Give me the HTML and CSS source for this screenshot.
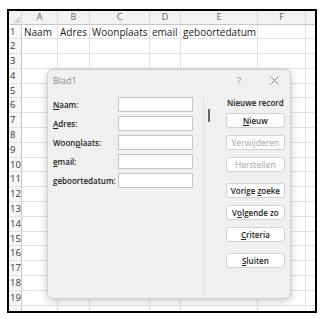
FILE: index.html
```html
<!DOCTYPE html>
<html lang="nl">
<head>
  <meta charset="UTF-8">
  <title>Blad1 - gegevensformulier</title>
  <link rel="stylesheet" href="styles.css">
</head>
<body>
  <div class="frame">
    <div class="sheet" id="sheet">
      <div class="hd corner"></div>
      <div class="hd">A</div>
      <div class="hd">B</div>
      <div class="hd">C</div>
      <div class="hd">D</div>
      <div class="hd">E</div>
      <div class="hd">F</div>
      <div class="hd"></div>

      <div class="rh">1</div>
      <div class="cell">Naam</div>
      <div class="cell">Adres</div>
      <div class="cell">Woonplaats</div>
      <div class="cell">email</div>
      <div class="cell">geboortedatum</div>
      <div class="cell"></div>
      <div class="cell"></div>
    </div>

    <div class="dialog">
      <div class="title-bar">
        <span class="title">Blad1</span>
        <span class="help">?</span>
        <span class="close">
          <svg width="9" height="9" viewBox="0 0 9 9"><path d="M0.5 0.5 L8.5 8.5 M8.5 0.5 L0.5 8.5" stroke="#8a8a8a" stroke-width="1" fill="none"/></svg>
        </span>
      </div>
      <div class="form-body">
        <div class="fields">
          <div class="field"><label><u>N</u>aam:</label><span class="input"></span></div>
          <div class="field"><label><u>A</u>dres:</label><span class="input"></span></div>
          <div class="field"><label>Woon<u>p</u>laats:</label><span class="input"></span></div>
          <div class="field"><label><u>e</u>mail:</label><span class="input"></span></div>
          <div class="field"><label><u>g</u>eboortedatum:</label><span class="input"></span></div>
        </div>
        <div class="divider"></div>
        <div class="scroll"><span class="thumb"></span></div>
        <div class="actions">
          <div class="record">Nieuwe record</div>
          <button class="btn"><u>N</u>ieuw</button>
          <button class="btn" disabled>Verwijderen</button>
          <button class="btn" disabled>Herstellen</button>
          <button class="btn group">Vorige <u>z</u>oeke</button>
          <button class="btn">V<u>o</u>lgende zo</button>
          <button class="btn"><u>C</u>riteria</button>
          <button class="btn group"><u>S</u>luiten</button>
        </div>
      </div>
    </div>
  </div>

  <script>
    const sheet = document.getElementById('sheet');
    // rows 2-19 numbered, row 20 only peeks out under the frame edge
    for (let r = 2; r <= 20; r++) {
      const head = document.createElement('div');
      head.className = 'rh';
      head.textContent = r < 20 ? r : '';
      sheet.appendChild(head);
      for (let c = 0; c < 7; c++) {
        const cell = document.createElement('div');
        cell.className = 'cell';
        sheet.appendChild(cell);
      }
    }
  </script>
</body>
</html>
```

FILE: styles.css
```css
body {
  margin: 0;
  background-color: #fff;
  font-family: 'Open Sans', 'Noto Sans', sans-serif;
  color: #222;
}

.frame {
  position: relative;
  margin: 9px 0 0 7px;
  width: 306px;
  height: 300px;
  border: 2px solid #000;
  overflow: hidden;
}

/* spreadsheet grid */

.sheet {
  display: grid;
  grid-template-columns: 13px 36px 32px 60px 31px 77px 48px 20px;
  grid-template-rows: 13.5px;
  grid-auto-rows: 14.8px;
}

.hd {
  box-sizing: border-box;
  background-color: #f2f2f2;
  border-right: 1px solid #dadada;
  border-bottom: 1px solid #c6c6c6;
  color: #666;
  font-size: 9px;
  line-height: 12px;
  text-align: center;
}

.corner {
  position: relative;
}

.corner::after {
  content: '';
  position: absolute;
  right: 1px;
  bottom: 1px;
  border-left: 7px solid transparent;
  border-bottom: 7px solid #d4d4d4;
}

.rh {
  box-sizing: border-box;
  background-color: #f7f7f7;
  border-right: 1px solid #c6c6c6;
  border-bottom: 1px solid #e2e2e2;
  color: #333;
  font-size: 9.5px;
  line-height: 14px;
  padding-left: 1px;
  white-space: nowrap;
}

.cell {
  box-sizing: border-box;
  border-right: 1px solid #e2e2e2;
  border-bottom: 1px solid #e2e2e2;
  font-size: 10px;
  font-weight: 500;
  line-height: 14px;
  padding-left: 2px;
  white-space: nowrap;
}

/* data form dialog */

.dialog {
  position: absolute;
  left: 38px;
  top: 58px;
  width: 244px;
  height: 230px;
  box-sizing: border-box;
  background-color: #f0f0f0;
  border: 1px solid #d0d0d0;
  border-radius: 6px;
  box-shadow: 0 2px 8px rgba(0,0,0,0.22);
  font-size: 8.5px;
}

.title-bar {
  display: flex;
  align-items: center;
  height: 21px;
  padding: 0 6px 0 5px;
}

.title {
  flex: 1;
  color: #8c8c8c;
  font-size: 9px;
}

.help {
  width: 20px;
  margin-right: 15px;
  text-align: center;
  color: #8c8c8c;
  font-size: 9.5px;
}

.close {
  display: flex;
  justify-content: center;
  width: 20px;
}

.form-body {
  display: flex;
  padding: 6px 5px 0 5px;
}

.fields {
  display: flex;
  flex-direction: column;
  gap: 4px;
}

.field {
  display: flex;
  align-items: center;
}

.field label {
  width: 65px;
  color: #222;
  font-size: 8px;
  font-weight: 600;
  white-space: nowrap;
}

.input {
  width: 75px;
  height: 15px;
  box-sizing: border-box;
  background-color: #fff;
  border: 1px solid #c4c4c4;
}

.divider {
  width: 1px;
  height: 200px;
  margin-left: 10px;
  background-color: #e0e0e0;
}

.scroll {
  width: 22px;
}

.thumb {
  display: block;
  width: 2px;
  height: 13px;
  margin: 12px 0 0 4px;
  background-color: #666;
}

.actions {
  display: flex;
  flex-direction: column;
  width: 60px;
}

.record {
  height: 12px;
  margin-bottom: 4px;
  text-align: center;
  font-size: 8px;
  font-weight: 600;
  line-height: 12px;
  white-space: nowrap;
}

.btn {
  height: 15px;
  margin: 0 0 7px 0;
  padding: 0;
  background-color: #fff;
  border: 1px solid #d2d2d2;
  border-radius: 3px;
  font-family: inherit;
  font-size: 8px;
  font-weight: 600;
  color: #222;
  white-space: nowrap;
  overflow: hidden;
}

.btn:disabled {
  color: #a4a4a4;
  font-size: 8.5px;
  font-weight: normal;
}

.btn.group {
  margin-top: 4px;
}
```
